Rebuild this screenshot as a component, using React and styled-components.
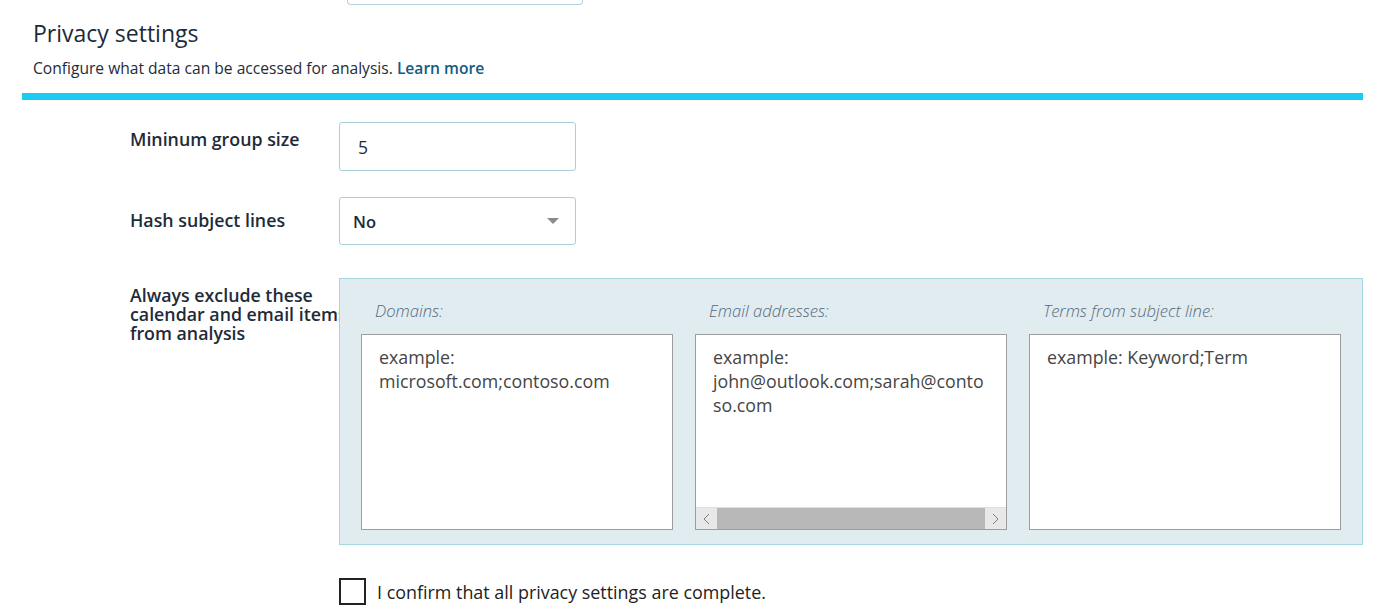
import React from "react"
import styled, { createGlobalStyle } from "styled-components"

const FONT = `"Open Sans", "Noto Sans", "DejaVu Sans", sans-serif`

const GlobalStyle = createGlobalStyle`
  html, body {
    margin: 0;
    background: #ffffff;
  }
  body {
    font-family: ${FONT};
    color: #1f2b38;
  }
  * {
    box-sizing: border-box;
  }
`

const Page = styled.div`
  padding: 0 25px 0 22px;
  width: 1388px;
`

const TopStub = styled.div`
  margin-left: 325px;
  width: 236px;
  height: 5px;
  border: 1px solid #b3d5df;
  border-top: none;
  border-radius: 0 0 4px 4px;
`

const Header = styled.div`
  padding-left: 11px;
`

const Title = styled.h2`
  margin: 14px 0 0;
  font-size: 23px;
  font-weight: 400;
  line-height: 28px;
  color: #1d2a38;
`

const Subtitle = styled.p`
  margin: 11px 0 0;
  font-size: 15.6px;
  line-height: 20px;
  color: #1f2b38;
`

const LearnMore = styled.a`
  color: #0f5b85;
  font-weight: 600;
  text-decoration: none;
`

const Bar = styled.div`
  margin-top: 15px;
  height: 7px;
  background: #1ccbf1;
`

const Form = styled.div`
  padding-left: 108px;
  padding-top: 22px;
`

const Row = styled.div`
  display: grid;
  grid-template-columns: 209px 1fr;
  margin-top: ${p => p.$gap || 0}px;
`

const Label = styled.div`
  width: 232px;
  padding-top: ${p => p.$offset}px;
  font-size: 17.8px;
  font-weight: 600;
  line-height: 19px;
  color: #1e2b39;
`

const Field = styled.div`
  width: 237px;
  height: 49px;
  border: 1px solid #a9cfdb;
  border-radius: 3px;
  background: #fff;
  display: flex;
  align-items: center;
  justify-content: space-between;
  padding: 0 14px 0 18px;
  font-size: 17.5px;
  color: #1e2b39;
`

const SelectField = styled(Field)`
  height: 48px;
  padding-left: 13px;
  font-weight: 600;
  font-size: 16.5px;
`

const Caret = styled.span`
  width: 0;
  height: 0;
  border-left: 6px solid transparent;
  border-right: 6px solid transparent;
  border-top: 6px solid #8b8b8b;
  margin-right: 2px;
`

const Panel = styled.div`
  position: relative;
  width: 1024px;
  background: #e1ecf1;
  border: 1px solid #a7d6e3;
  padding: 21px 21px 14px;
`

const Columns = styled.div`
  display: grid;
  grid-template-columns: repeat(3, 312px);
  column-gap: 22px;
`

const ColumnLabel = styled.div`
  padding-left: 14px;
  font-size: 16.6px;
  font-style: italic;
  font-weight: 300;
  line-height: 22px;
  color: #566a7c;
  margin-bottom: 12px;
`

const Box = styled.div`
  height: 196px;
  background: #fff;
  border: 1px solid #9d9d9d;
  display: flex;
  flex-direction: column;
`

const BoxText = styled.div`
  flex: 1;
  padding: 10px 16px 0 17px;
  font-size: 17.8px;
  line-height: 24px;
  color: #454545;
  overflow-wrap: anywhere;
`

const Scrollbar = styled.div`
  height: 22px;
  display: flex;
  background: #e8e8e8;
  border-top: 1px solid #dedede;
`

const ScrollArrow = styled.span`
  width: 21px;
  display: flex;
  align-items: center;
  justify-content: center;
`

const Thumb = styled.span`
  flex: 1;
  background: #b8b8b8;
`

const ConfirmRow = styled.label`
  grid-column: 2;
  display: flex;
  align-items: center;
  gap: 11px;
  font-size: 17.9px;
  color: #222;
`

const CheckBox = styled.span`
  width: 27px;
  height: 27px;
  border: 2px solid #222;
  background: #fff;
`

const Chevron = ({ dir }) => (
  <svg width="7" height="12" viewBox="0 0 7 12">
    <path
      d={dir === "left" ? "M6 1 L1 6 L6 11" : "M1 1 L6 6 L1 11"}
      fill="none"
      stroke="#7d7d7d"
      strokeWidth="1"
    />
  </svg>
)

const columns = [
  { label: "Domains:", text: "example: microsoft.com;contoso.com" },
  { label: "Email addresses:", text: "example: john@outlook.com;sarah@contoso.com", scroll: true },
  { label: "Terms from subject line:", text: "example: Keyword;Term" },
]

export default function App() {
  return (
    <Page>
      <GlobalStyle />
      <TopStub />
      <Header>
        <Title>Privacy settings</Title>
        <Subtitle>
          Configure what data can be accessed for analysis. <LearnMore href="#">Learn more</LearnMore>
        </Subtitle>
      </Header>
      <Bar />
      <Form>
        <Row>
          <Label $offset={8}>Mininum group size</Label>
          <Field>5</Field>
        </Row>
        <Row $gap={26}>
          <Label $offset={14}>Hash subject lines</Label>
          <SelectField>
            No
            <Caret />
          </SelectField>
        </Row>
        <Row $gap={33}>
          <Label $offset={8}>Always exclude these calendar and email items from analysis</Label>
          <Panel>
            <Columns>
              {columns.map(col => (
                <div key={col.label}>
                  <ColumnLabel>{col.label}</ColumnLabel>
                  <Box>
                    <BoxText>{col.text}</BoxText>
                    {col.scroll && (
                      <Scrollbar>
                        <ScrollArrow>
                          <Chevron dir="left" />
                        </ScrollArrow>
                        <Thumb />
                        <ScrollArrow>
                          <Chevron dir="right" />
                        </ScrollArrow>
                      </Scrollbar>
                    )}
                  </Box>
                </div>
              ))}
            </Columns>
          </Panel>
        </Row>
        <Row $gap={33}>
          <ConfirmRow>
            <CheckBox />
            I confirm that all privacy settings are complete.
          </ConfirmRow>
        </Row>
      </Form>
    </Page>
  )
}
